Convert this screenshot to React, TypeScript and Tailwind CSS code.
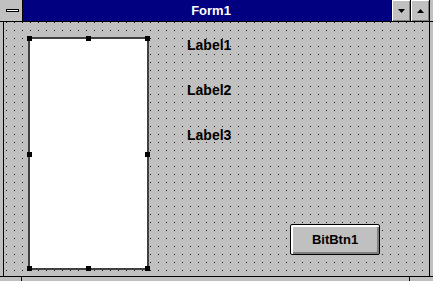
import React from 'react'

const font = { fontFamily: '"Liberation Sans", Arial, sans-serif' }

function Handle({ className }: { className: string }) {
  return <div className={`absolute w-[5px] h-[5px] bg-black ${className}`} />
}

function TitleButton({ up }: { up?: boolean }) {
  return (
    <div className="w-[19px] h-[21px] bg-[#c0c0c0] border-l border-black flex items-center justify-center shadow-[inset_1px_1px_0_#fff,inset_-1px_-1px_0_#808080]">
      <svg width="7" height="4" viewBox="0 0 7 4">
        {up ? <path d="M3.5 0 L7 4 L0 4 Z" fill="#000" /> : <path d="M0 0 L7 0 L3.5 4 Z" fill="#000" />}
      </svg>
    </div>
  )
}

export default function App() {
  return (
    <div className="w-[433px] h-[281px] bg-[#c0c0c0] relative overflow-hidden flex flex-col" style={font}>
      {/* title bar */}
      <div className="h-[22px] flex border-b border-black">
        <div className="w-[23px] border-r border-black flex items-center justify-center pl-[3px]">
          <div className="w-[13px] h-[3px] bg-white border border-black" />
        </div>
        <div className="flex-1 bg-[#000080] flex items-center justify-center text-white font-bold text-[13px] leading-none pb-[1px] pl-[8px]">
          Form1
        </div>
        <TitleButton />
        <TitleButton up />
        <div className="w-[4px] border-l border-black" />
      </div>

      {/* client area */}
      <div className="flex-1 flex pl-[3px] pr-[3px]">
        <div className="flex-1 flex border-l border-r border-black bg-[conic-gradient(from_270deg_at_1px_1px,#222_90deg,transparent_0)] bg-[size:8px_8px] bg-[position:2px_0px] pl-[24px] pt-[15px]">
          <div className="relative w-[121px] h-[233px] bg-white border-2 border-[#404040]">
            <Handle className="-left-[3px] -top-[3px]" />
            <Handle className="left-[56px] -top-[3px]" />
            <Handle className="-right-[3px] -top-[3px]" />
            <Handle className="-left-[3px] top-[113px]" />
            <Handle className="-right-[3px] top-[113px]" />
            <Handle className="-left-[3px] -bottom-[3px]" />
            <Handle className="left-[56px] -bottom-[3px]" />
            <Handle className="-right-[3px] -bottom-[3px]" />
          </div>
          <div className="flex flex-col">
            <div className="pl-[38px] flex flex-col gap-[29px] text-[14px] leading-[16px] font-bold text-black">
              <span>Label1</span>
              <span>Label2</span>
              <span>Label3</span>
            </div>
            <div className="ml-[141px] mt-[81px] w-[90px] h-[31px] border border-black rounded-[2px] bg-[#c0c0c0] shadow-[inset_1px_1px_0_#fff,inset_2px_2px_0_#fff,inset_-1px_-1px_0_#808080,inset_-2px_-2px_0_#808080] flex items-center justify-center text-[13px] font-bold">
              BitBtn1
            </div>
          </div>
        </div>
      </div>

      {/* bottom frame */}
      <div className="h-[5px] border-t border-black flex">
        <div className="w-[22px] border-r border-black" />
        <div className="w-[388px] border-r border-black" />
      </div>
    </div>
  )
}
